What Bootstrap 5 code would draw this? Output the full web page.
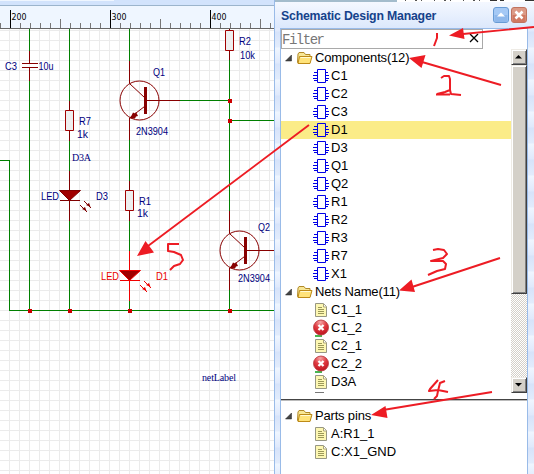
<!DOCTYPE html>
<html lang="en">
<head>
<meta charset="utf-8">
<meta name="viewport" content="width=device-width, initial-scale=1">
<title>Schematic Design Manager</title>
<link href="https://cdn.jsdelivr.net/npm/bootstrap@5.3.0/dist/css/bootstrap.min.css" rel="stylesheet">
<style>
body{width:534px;height:474px;font-family:"Liberation Sans",Arial,sans-serif;color:#000;background:#fff}
svg{display:block}
.board{width:274px;height:474px}
.manager{width:260px;height:474px;border-left:1px solid #99bbe8;background:repeating-linear-gradient(180deg,#d6e3fa 0,#e2ecfc 15px,#eff6ff 16px,#dfe9fc 31px,#d6e3fa 32px)}
.strip{height:2px}
.titlebar{height:26px;padding:1px 5px 0 6px;background:linear-gradient(#f4f8ff,#dce8fc)}
.titlebar h1{font-size:12.300px;line-height:26px;font-weight:700;color:#15428b;white-space:nowrap;letter-spacing:-.2px}
.content-box{width:248px;height:446px;margin-left:5px;background:#fff;border-left:1px solid #99bbe8;border-right:1px solid #99bbe8;border-top:1px solid #99bbe8}
.filter-row{width:202px;height:20px;border:1px solid #a9a9a9}
.filter-input{font:14px/18px "Liberation Mono",monospace;color:#777}
.tree-area{height:344px}
.tree-row{height:18px;font-size:13px;line-height:18px;white-space:nowrap;padding-left:32px}
.tree-head{padding-left:0;letter-spacing:-.18px}
.tree-row svg{flex:none;margin-right:2px}
.tree-head svg{margin-right:0}
.tree-row.picked{background:#fbec88}
.scroller{width:16px;background:repeating-conic-gradient(#d4d0c8 0 25%,#fff 0 50%) 0 0/2px 2px}
.scroll-part{background:#d4d0c8;border:1px solid;border-color:#eeebe5 #404040 #404040 #eeebe5;box-shadow:inset 1px 1px #fff,inset -1px -1px #808080}
.scroll-end{height:16px}
.thumb{height:229px}
.splitter{height:2px;margin-top:6px;border-top:1px solid #444;background:#bbb}
.pins{padding-top:6px}
.notes{pointer-events:none}
</style>
<script src="https://cdn.jsdelivr.net/npm/bootstrap@5.3.0/dist/js/bootstrap.bundle.min.js"></script>
</head>
<body class="d-flex overflow-hidden position-relative">
<svg width="0" height="0" class="position-absolute">
<defs>
<symbol id="chip" viewBox="0 0 16 18"><path d="M4.500 2.500h8v13h-8zM1 5.500h3M0 8.500h4M0 11.500h4M1 13.500h3M13 5.500h2M13 8.500h3M13 11.500h3M13 13.500h2" fill="none" stroke="#0000e6"/></symbol>
<symbol id="folder" viewBox="0 0 34 18"><path d="M10.500 6v6h-6z" fill="#444" stroke="#222" stroke-width=".5"/><path d="M16.500 13.500 17 5l1-1.500h5l1.500 2h4.500v8z" fill="#f8e795" stroke="#b18928"/><path d="M18.500 7.500h12.500l-2 7H17z" fill="#ffe37a" stroke="#bd8a17"/><path d="M19.500 8.500h10" stroke="#fffbd5"/></symbol>
<symbol id="doc" viewBox="0 0 16 18"><path d="M2.500 2.500h8l3 3v10h-11z" fill="#fdf7b2" stroke="#979783"/><path d="M10.500 3v3h3" fill="#fff" stroke="#aaa57a"/><path d="M5 6.500h4M5 8.500h6M5 10.500h6M5 12.500h6" stroke="#9b9858"/></symbol>
<symbol id="bad" viewBox="0 0 16 18"><path d="M2 17h7" stroke="#49b651" stroke-width="2"/><circle cx="8" cy="8.500" r="7.500" fill="url(#redball)" stroke="#b6353b" stroke-width=".8"/><path d="M5.500 6l5 5m0-5l-5 5" stroke="#fff" stroke-width="2.300"/></symbol>
<radialGradient id="redball" cx=".45" cy=".15" r=".85"><stop stop-color="#f5a5a5"/><stop offset=".5" stop-color="#df3940"/><stop offset="1" stop-color="#bd141e"/></radialGradient>
<g id="resistor" fill="#eee" stroke="#a00000"><path d="M.5-9V31" fill="none" stroke="#800000"/><path d="M-3.500.5h8v20h-8z"/></g>
<g id="transistor" stroke="#880000" fill="none"><circle cx="10.500" cy="0" r="19.500"/><path d="M.5-39.500v22.500L15.500-3M15.500 6L.5 17.500v22M17 0h34"/><path d="M16.500-13.500v27" stroke-width="3"/><path d="M1 18l3-6 2 1 1-1.500 2 4-2 .5-1 2z" fill="#880000" stroke="none"/></g>
<g id="led"><path d="M.5-19v50" fill="none" stroke="currentColor"/><path d="M-9.500.5h21L.5 10.500z" fill="#a00000" stroke="currentColor"/><path d="M-9 10.500h20M11 15l7 7M15 11l7 7" fill="none" stroke="currentColor"/><path d="M13 19l3-2 1.500 4zM17 15l3-2 1.500 4z" fill="currentColor"/></g>
<pattern id="grid" x="9" y="0" width="10" height="10" patternUnits="userSpaceOnUse"><path d="M.5 0v10M0 .5h10" stroke="#ebebeb"/></pattern>
<pattern id="tick" x="0" y="0" width="10" height="29" patternUnits="userSpaceOnUse"><path d="M.5 23v5" stroke="#777"/></pattern>
</defs>
</svg>

<main class="board flex-shrink-0">
<svg width="274" height="474" font-family="Liberation Sans, Arial, sans-serif" font-size="10.500" fill="#000080">
<rect width="274" height="474" fill="#fff"/>
<rect y="29" width="274" height="445" fill="url(#grid)"/>
<rect width="274" height="6" fill="#d2e3fc"/><path d="M0 .5h114" stroke="#a5bdd3"/><path d="M0 0h114v1H0z" fill="#eff6ff"/><path d="M0 5.500h274" stroke="#9bb4cc"/>
<rect y="6" width="274" height="22" fill="#eff6ff"/><rect y="22" width="274" height="6" fill="url(#tick)"/>
<path d="M60.500 19v9M160.500 19v9M260.500 19v9" stroke="#777"/><path d="M10.500 10v18M110.500 10v18M210.500 10v18" stroke="#000"/><path d="M0 28.500h274" stroke="#666"/>
<g fill="#000" font-family="DejaVu Sans, sans-serif" font-size="9"><text x="11.500" y="20" textLength="15" lengthAdjust="spacingAndGlyphs">200</text><text x="111.500" y="20" textLength="15" lengthAdjust="spacingAndGlyphs">300</text><text x="211.500" y="20" textLength="15" lengthAdjust="spacingAndGlyphs">400</text></g>
<g fill="#008000"><path d="M29 29h1v23h-1zM29 80h1v231h-1zM69 29h1v73h-1zM69 140h1v32h-1zM69 220h1v90h-1zM129 29h1v33h-1zM129 140h1v42h-1zM129 220h1v32h-1zM129 300h1v10h-1zM229 60h1v152h-1zM229 290h1v20h-1zM0 160h10v150h264v1H9V161H0zM180 100h49v1h-49zM229 120h45v1h-45z"/></g>
<path d="M29.500 51v12M22 63.500h16M22 67.500h16M29.500 68v13" stroke="#880000"/>
<use href="#resistor" x="69" y="110"/><use href="#resistor" x="129" y="190"/>
<path d="M229.500 29v31" stroke="#800000"/><path d="M225.500 30.500h8v20h-8z" fill="#eee" stroke="#a00000"/>
<use href="#transistor" x="129" y="100.500"/><use href="#transistor" x="229" y="250.500"/>
<g color="#800000"><use href="#led" x="69" y="190"/></g><g color="#f00000"><use href="#led" x="129" y="270"/></g>
<g fill="#cc0000"><path d="M28 309h4v4h-4zM68 309h4v4h-4zM128 309h4v4h-4zM228 309h4v4h-4zM228 99h4v4h-4zM228 119h4v4h-4z"/></g>
<text x="5" y="70" textLength="12" lengthAdjust="spacingAndGlyphs">C3</text><text x="38.500" y="70" textLength="15" lengthAdjust="spacingAndGlyphs">10u</text><text x="153" y="76" textLength="12" lengthAdjust="spacingAndGlyphs">Q1</text><text x="136" y="135" textLength="32" lengthAdjust="spacingAndGlyphs">2N3904</text><text x="79" y="125" textLength="12" lengthAdjust="spacingAndGlyphs">R7</text><text x="77" y="138" textLength="11">1k</text><text x="239" y="45" textLength="12" lengthAdjust="spacingAndGlyphs">R2</text><text x="240" y="59" textLength="15" lengthAdjust="spacingAndGlyphs">10k</text><text x="41" y="200" textLength="18" lengthAdjust="spacingAndGlyphs">LED</text><text x="96" y="200" textLength="12" lengthAdjust="spacingAndGlyphs">D3</text><text x="139" y="205" textLength="12" lengthAdjust="spacingAndGlyphs">R1</text><text x="137" y="217" textLength="11">1k</text><text x="258" y="231" textLength="12" lengthAdjust="spacingAndGlyphs">Q2</text><text x="238" y="282" textLength="32" lengthAdjust="spacingAndGlyphs">2N3904</text>
<g fill="#e80000"><text x="101" y="280" textLength="18" lengthAdjust="spacingAndGlyphs">LED</text><text x="156" y="280" textLength="12" lengthAdjust="spacingAndGlyphs">D1</text></g>
<g font-family="Liberation Serif, Times New Roman, serif" font-size="10"><text x="72" y="161" textLength="19">D3A</text><text x="202" y="381" textLength="34">netLabel</text></g>
</svg>
</main>

<aside class="manager flex-shrink-0">
<svg class="strip" width="259" height="2"><path d="M0 0h122v2H0z" fill="#a3bccc"/><path d="M122 0h137v2H122z" fill="#fff"/><path d="M130 .5h75" stroke="#555" stroke-dasharray="1 9 2 4 1 12"/><path d="M215 .5h7M225 .5h4M250 .5h9" stroke="#333"/></svg>
<header class="titlebar d-flex align-items-start">
<h1 class="m-0 flex-grow-1">Schematic Design Manager</h1>
<svg class="mt-1 flex-shrink-0" width="36" height="18"><rect x=".5" y=".5" width="15" height="15" rx="2.500" fill="#a5c9f5" stroke="#689bd4"/><path d="M1.500 8h13v7h-13z" fill="#8fb8eb"/><path d="M4 9.500 8 5.500l4 4z" fill="#fff"/><g transform="translate(18 0)"><rect x=".5" y=".5" width="15" height="15" rx="2.500" fill="#dc9a87" stroke="#c0735f"/><path d="M1.500 8h13v7h-13z" fill="#d17861"/><path d="M4.500 4.500l7 7m0-7l-7 7" stroke="#fff" stroke-width="2.500"/></g></svg>
</header>
<div class="content-box">
<div class="filter-row d-flex justify-content-between align-items-center bg-white"><span class="filter-input"><svg width="48" height="18" fill="#777"><text x="0" y="14" textLength="43">Filter</text></svg></span><svg width="18" height="18"><path d="M6 4l8 8M14 4l-8 8" stroke="#000" stroke-width="1.300"/></svg></div>
<div class="tree-area d-flex overflow-hidden">
<div class="flex-grow-1" id="tree"></div>
<div class="scroller d-flex flex-column"><div class="scroll-part scroll-end"><svg width="14" height="14"><path d="M3 8.500h7L6.500 5z"/></svg></div><div class="scroll-part thumb"></div><div class="scroll-part scroll-end mt-auto"><svg width="14" height="14"><path d="M3 5h7L6.500 8.500z"/></svg></div></div>
</div>
<div class="splitter"></div>
<div class="pins" id="pins"></div>
</div>
</aside>

<svg class="notes position-absolute top-0 start-0" width="534" height="474" fill="none" stroke="#ed1c24" stroke-width="1.900">
<path d="M534 27 463 34M501 85 422 62M500 258 412 287M492 392 383 410M309 125 148 246"/>
<g fill="#ed1c24" stroke="none"><path d="M449 35.500 463 28l1.500 11zM409 58l16.500-3-4 13z"/><path d="M399 290.500l12.500-11L415 292zM371 415l14.500-9 2 12zM137 256l8.500-15 8.500 11.500z"/></g>
<g stroke-width="2" stroke-linejoin="round"><path d="M437 33v5l-3 8M441 78l3-2h5l1 3v11M437 94l8-2 5-2 1 4 10 1M436 94.500h14M433 250l5-1 6 1 3 4-4 4-12 3h12l3 3-1 5-8 2-9 4M438 380l-8 9-1 2 9-1 10 2M445 381l-5 2-2 8-1 5-3 3M179 244h-11v7l6 1 7 3 2 5-3 4-6 2-4 4"/></g>
</svg>

<script>
const trees={
 tree:[["folder","Components(12)"],...["C1","C2","C3","D1","D3","Q1","Q2","R1","R2","R3","R7","X1"].map(n=>["chip",n]),["folder","Nets Name(11)"],["doc","C1_1"],["bad","C1_2"],["doc","C2_1"],["bad","C2_2"],["doc","D3A"]],
 pins:[["folder","Parts pins"],["doc","A:R1_1"],["doc","C:X1_GND"]]};
for(const [id,rows] of Object.entries(trees)){
 document.getElementById(id).innerHTML=rows.map(([icon,label])=>{
  const head=icon==="folder";
  return `<div class="tree-row d-flex align-items-center ${head?"tree-head":""} ${label==="D1"?"picked":""}"><svg width="${head?34:16}" height="18"><use href="#${icon}"/></svg><span>${label}</span></div>`;
 }).join("");
}
document.getElementById("tree").insertAdjacentHTML("beforeend",'<svg width="60" height="2"><path d="M34 1.500h9" stroke="#777"/></svg>');
</script>
</body>
</html>
